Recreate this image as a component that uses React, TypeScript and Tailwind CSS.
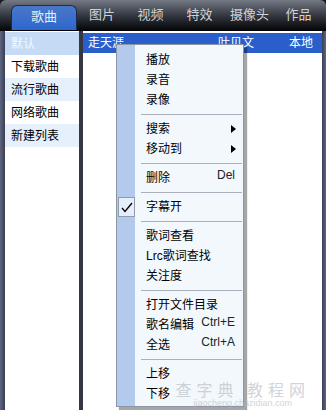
import React from "react";

const font = { fontFamily: '"Liberation Sans", "Noto Sans CJK SC", sans-serif' };

type Item =
  | { kind: "item"; label: string; shortcut?: string; submenu?: boolean; checked?: boolean }
  | { kind: "sep" };

const menu: Item[] = [
  { kind: "item", label: "播放" },
  { kind: "item", label: "录音" },
  { kind: "item", label: "录像" },
  { kind: "sep" },
  { kind: "item", label: "搜索", submenu: true },
  { kind: "item", label: "移动到", submenu: true },
  { kind: "sep" },
  { kind: "item", label: "删除", shortcut: "Del" },
  { kind: "sep" },
  { kind: "item", label: "字幕开", checked: true },
  { kind: "sep" },
  { kind: "item", label: "歌词查看" },
  { kind: "item", label: "Lrc歌词查找" },
  { kind: "item", label: "关注度" },
  { kind: "sep" },
  { kind: "item", label: "打开文件目录" },
  { kind: "item", label: "歌名编辑", shortcut: "Ctrl+E" },
  { kind: "item", label: "全选", shortcut: "Ctrl+A" },
  { kind: "sep" },
  { kind: "item", label: "上移" },
  { kind: "item", label: "下移" },
];

const playlists = [
  { name: "默认", bg: "bg-[#c4daf5]", fg: "text-[#f4f8ff]" },
  { name: "下载歌曲", bg: "bg-white", fg: "text-black" },
  { name: "流行歌曲", bg: "bg-[#e6f0fc]", fg: "text-black" },
  { name: "网络歌曲", bg: "bg-white", fg: "text-black" },
  { name: "新建列表", bg: "bg-[#e6f0fc]", fg: "text-black" },
];

const tabs = [
  { name: "图片", w: "w-[50px]" },
  { name: "视频", w: "w-[47px]" },
  { name: "特效", w: "w-[51px]" },
  { name: "摄像头", w: "w-[49px]" },
  { name: "作品", w: "w-[49px]" },
];

function ContextMenu() {
  return (
    <div className="absolute left-[116px] top-[44px] w-[128px] border border-[#8c95a3] bg-[#f3f8fd] shadow-[3px_3px_1px_rgba(0,0,0,0.35)]">
      <div className="absolute bottom-0 left-0 top-0 w-[18px] bg-[#b3caec]" />
      <div className="relative flex flex-col pb-[2px] pt-[5px]">
        {menu.map((it, i) =>
          it.kind === "sep" ? (
            <div key={i} className="flex h-[9px] items-center pl-[24px] pr-[1px]">
              <div className="h-px w-full bg-[#a9b0bb]" />
            </div>
          ) : (
            <div key={i} className="relative flex h-[20px] items-center pl-[29px] pr-[8px] text-[12px] text-black">
              {it.checked ? (
                <div className="absolute left-[1px] top-[0px] flex h-[20px] w-[17px] items-center justify-center border border-[#8e9cb2] bg-[#e6eef9]">
                  <svg width="12" height="11" viewBox="0 0 12 11">
                    <path d="M1 6 L4 9.5 L11 1" fill="none" stroke="#000" strokeWidth="1.3" />
                  </svg>
                </div>
              ) : null}
              <span className="flex-1 leading-none">{it.label}</span>
              {it.shortcut ? (
                <span className="mt-[-7px] leading-none text-[#222]">{it.shortcut}</span>
              ) : null}
              {it.submenu ? (
                <svg width="5" height="8" viewBox="0 0 5 8" className="mr-[-1px]">
                  <path d="M0 0 L5 4 L0 8 Z" fill="#000" />
                </svg>
              ) : null}
            </div>
          ),
        )}
      </div>
    </div>
  );
}

export default function App() {
  return (
    <div style={font} className="relative flex h-[410px] w-[326px] flex-col overflow-hidden bg-[#1a1d24]">
      <div className="flex h-[31px] items-end rounded-t-[6px] border-b border-black bg-gradient-to-b from-[#747a85] via-[#363a43] to-[#07080a]">
        <div className="ml-[11px] flex h-[25px] w-[66px] items-center justify-center rounded-t-[6px] border border-b-0 border-[#1b2a4e] bg-gradient-to-b from-[#4a77c6] to-[#2c67cf] pb-[3px] text-[13px] text-[#e4ecfa]">
          歌曲
        </div>
        {tabs.map((t) => (
          <div key={t.name} className={`${t.w} flex h-[25px] items-center justify-center pb-[5px] text-[13px] text-[#cdd1d8]`}>
            {t.name}
          </div>
        ))}
      </div>

      <div className="flex flex-1">
        <div className="w-[5px] bg-gradient-to-r from-[#5f6680] to-[#3a3f55]" />
        <div className="flex w-[74px] flex-col bg-white pt-[1px]">
          {playlists.map((p) => (
            <div key={p.name} className={`flex h-[23px] items-center pl-[6px] text-[12px] ${p.bg} ${p.fg}`}>
              {p.name}
            </div>
          ))}
        </div>
        <div className="w-[4px] bg-[#353842]" />
        <div className="flex flex-1 flex-col bg-white pt-[2px]">
          <div className="flex h-[20px] items-center bg-[#2a5fcb] pl-[5px] text-[12px] text-white">
            <span className="w-[130px]">走天涯</span>
            <span className="w-[71px]">叶贝文</span>
            <span>本地</span>
          </div>
        </div>
        <div className="w-[4px] bg-gradient-to-r from-[#3a3f55] to-[#5f6680]" />
      </div>

      <ContextMenu />

      <div className="pointer-events-none absolute bottom-[2px] right-[16px] flex flex-col items-center text-[#b4b8c0] opacity-60">
        <span className="text-[16px] leading-[18px] tracking-[5px]" style={{ fontFamily: '"Noto Sans CJK SC", sans-serif' }}>
          查字典 教程网
        </span>
        <span className="text-[9px] leading-[10px]">jiaocheng.chazidian.com</span>
      </div>
    </div>
  );
}
